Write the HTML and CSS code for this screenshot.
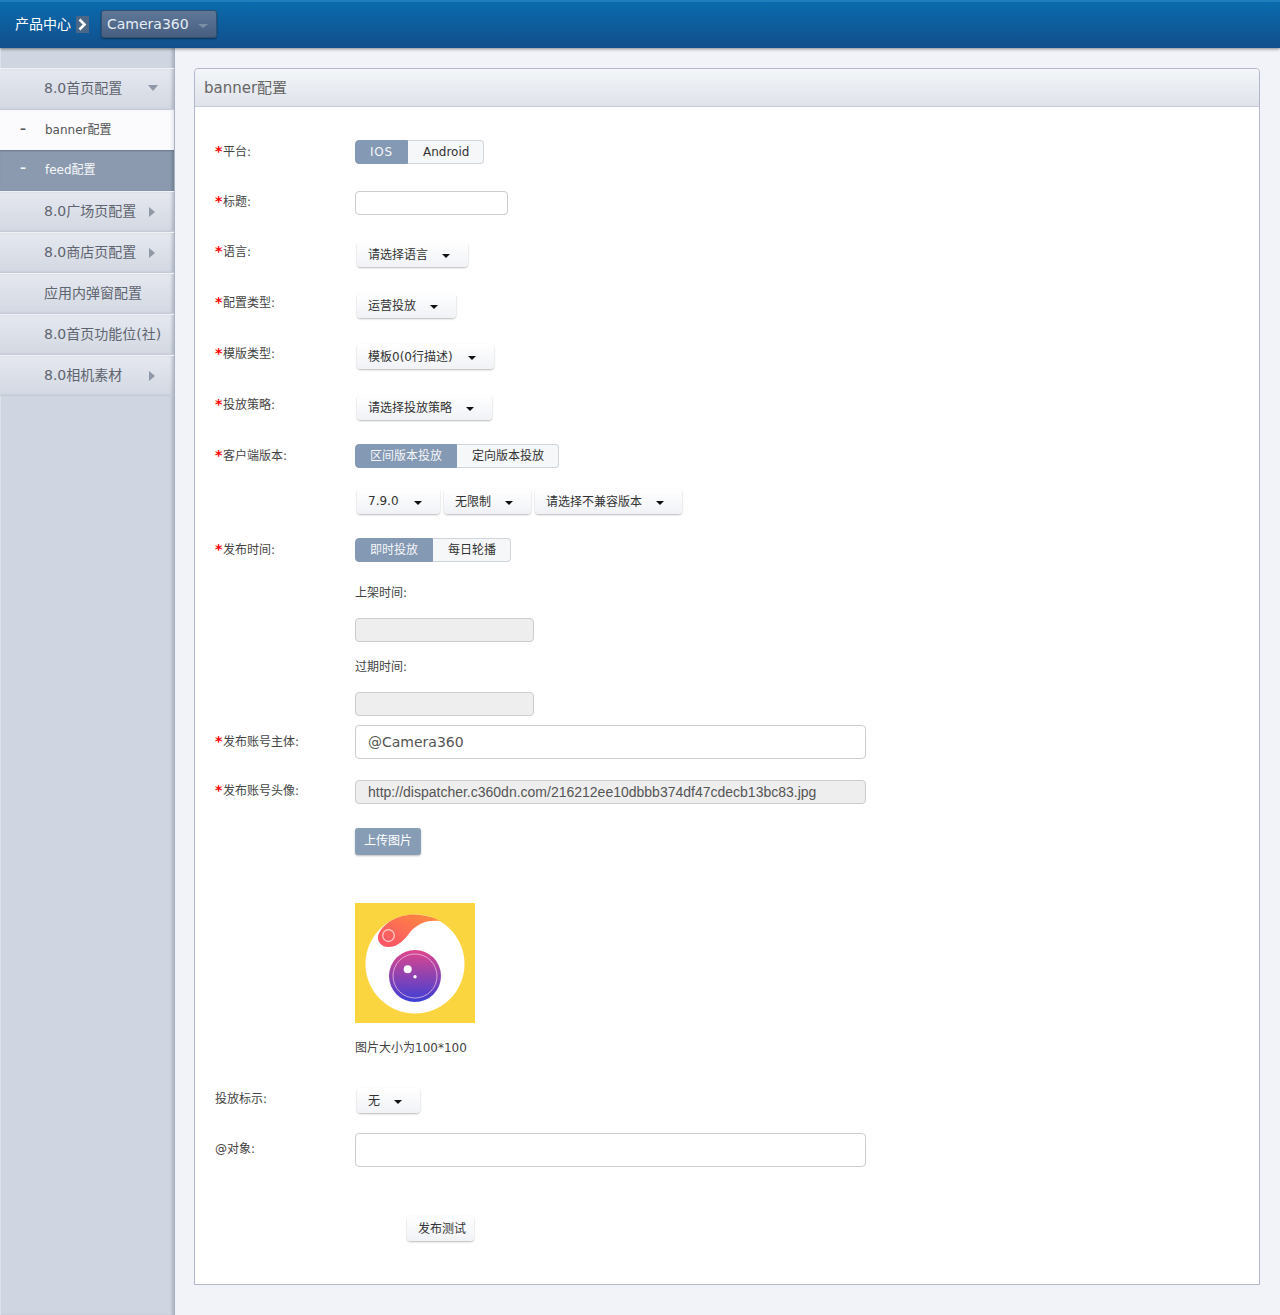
FILE: index.html
```html
<!DOCTYPE html>
<html lang="zh-CN">
<head>
<meta charset="utf-8">
<title>banner配置</title>
<link rel="stylesheet" href="styles.css">
</head>
<body>
<header class="topbar">
  <span class="crumb">产品中心</span>
  <span class="crumb-sep"><svg width="13" height="17" viewBox="0 0 13 17"><path d="M3.5 3.5 L8.5 8.5 L3.5 13.5" fill="none" stroke="#fff" stroke-width="2.6"/></svg></span>
  <button class="app-select"><span>Camera360</span><i class="app-caret"></i></button>
</header>
<div class="layout">
  <nav class="sidebar">
    <div class="nav-item open"><span>8.0首页配置</span><i class="tri-down"></i></div>
    <div class="nav-sub"><b>–</b><span>banner配置</span></div>
    <div class="nav-sub active"><b>–</b><span>feed配置</span></div>
    <div class="nav-item"><span>8.0广场页配置</span><i class="tri-right"></i></div>
    <div class="nav-item"><span>8.0商店页配置</span><i class="tri-right"></i></div>
    <div class="nav-item"><span>应用内弹窗配置</span></div>
    <div class="nav-item"><span>8.0首页功能位(社)</span></div>
    <div class="nav-item"><span>8.0相机素材</span><i class="tri-right"></i></div>
  </nav>
  <main class="main">
    <section class="panel">
      <h1 class="panel-title">banner配置</h1>
      <form class="panel-body">
        <div class="row h51"><label class="lbl low"><em>*</em>平台:</label>
          <div class="seg"><span class="seg-btn on latin">IOS</span><span class="seg-btn">Android</span></div></div>
        <div class="row h50"><label class="lbl"><em>*</em>标题:</label>
          <input class="input w153" type="text"></div>
        <div class="row h51"><label class="lbl"><em>*</em>语言:</label>
          <div class="drops nudge"><span class="drop">请选择语言<i></i></span></div></div>
        <div class="row h51"><label class="lbl"><em>*</em>配置类型:</label>
          <div class="drops nudge"><span class="drop">运营投放<i></i></span></div></div>
        <div class="row h51"><label class="lbl"><em>*</em>模版类型:</label>
          <div class="drops nudge"><span class="drop num">模板0(0行描述)<i></i></span></div></div>
        <div class="row h50"><label class="lbl"><em>*</em>投放策略:</label>
          <div class="drops nudge"><span class="drop">请选择投放策略<i></i></span></div></div>
        <div class="row h45"><label class="lbl low"><em>*</em>客户端版本:</label>
          <div class="seg"><span class="seg-btn on">区间版本投放</span><span class="seg-btn">定向版本投放</span></div></div>
        <div class="row h49"><div class="lbl"></div>
          <div class="drops"><span class="drop num">7.9.0<i></i></span><span class="drop">无限制<i></i></span><span class="drop">请选择不兼容版本<i></i></span></div></div>
        <div class="row h44"><label class="lbl low"><em>*</em>发布时间:</label>
          <div class="seg"><span class="seg-btn on">即时投放</span><span class="seg-btn">每日轮播</span></div></div>
        <div class="row h36"><div class="lbl"></div><span class="sub-lbl">上架时间:</span></div>
        <div class="row h38"><div class="lbl"></div><input class="input w179 off" type="text" disabled></div>
        <div class="row h36"><div class="lbl"></div><span class="sub-lbl">过期时间:</span></div>
        <div class="row h33"><div class="lbl"></div><input class="input w179 off" type="text" disabled></div>
        <div class="row h55"><label class="lbl tall"><em>*</em>发布账号主体:</label>
          <input class="input w511 big" type="text" value="@Camera360"></div>
        <div class="row h48"><label class="lbl"><em>*</em>发布账号头像:</label>
          <input class="input w511 off url" type="text" value="http://dispatcher.c360dn.com/216212ee10dbbb374df47cdecb13bc83.jpg" disabled></div>
        <div class="row h75"><div class="lbl"></div><span class="upload">上传图片</span></div>
        <div class="row h133"><div class="lbl"></div>
          <svg class="avatar" width="120" height="120" viewBox="0 0 120 120">
            <defs>
              <linearGradient id="lens" x1="0" y1="0" x2="0" y2="1"><stop offset="0" stop-color="#e0468c"/><stop offset="1" stop-color="#3c3fd6"/></linearGradient>
              <linearGradient id="tear" x1="0" y1="1" x2="1" y2="0"><stop offset="0" stop-color="#f94f6c"/><stop offset="1" stop-color="#ff8f3a"/></linearGradient>
            </defs>
            <rect width="120" height="120" fill="#fbd540"/>
            <circle cx="60" cy="61" r="49.5" fill="#fff"/>
            <path d="M23 33 C27 20 44 11 60 11.5 C70 12 78 14 85 18 C72 17 64 20 56 28 C50 36 44 44 33 44 C27 44 22 39 23 33 Z" fill="url(#tear)"/>
            <circle cx="33.5" cy="32.5" r="5.8" fill="none" stroke="#ffd0cf" stroke-width="1.2"/>
            <circle cx="60" cy="73" r="26" fill="url(#lens)"/>
            <circle cx="60" cy="73" r="22" fill="none" stroke="#f2c4e4" stroke-opacity=".75" stroke-width="1"/>
            <circle cx="52.7" cy="66.3" r="4" fill="#fff"/>
            <circle cx="60" cy="73.7" r="1.7" fill="#fff"/>
          </svg></div>
        <div class="row h52"><div class="lbl"></div><span class="sub-lbl note">图片大小为100*100</span></div>
        <div class="row h45"><label class="lbl"><span class="plain">投放标示:</span></label>
          <div class="drops"><span class="drop">无<i></i></span></div></div>
        <div class="row h83"><label class="lbl mid"><span class="plain">@对象:</span></label>
          <input class="input w511 big" type="text"></div>
        <div class="row submit"><span class="drop test">发布测试</span></div>
      </form>
    </section>
  </main>
</div>
</body>
</html>
```

FILE: styles.css
```css
* { box-sizing: border-box; }
html, body { margin: 0; padding: 0; }
body {
  font-family: "DejaVu Sans", "Noto Sans CJK SC", sans-serif;
  font-size: 12px;
  color: #444;
  background: #f1f3f9;
  height: 1315px;
  overflow: hidden;
}

/* top bar */
.topbar {
  height: 48px;
  display: flex;
  align-items: center;
  padding-left: 15px;
  border-top: 2px solid #1e7dbb;
  background: linear-gradient(#0a6bad, #124f8c);
  box-shadow: 0 1px 3px rgba(0, 0, 0, .45);
  position: relative;
  z-index: 2;
}
.crumb { color: #fff; font-size: 14px; width: 61px; margin-top: -5px; }
.crumb-sep {
  width: 13px; height: 17px; background: #4b6788; display: block; margin-top: -2px;
}
.crumb-sep svg { display: block; }
.app-select {
  margin: -2px 0 0 12px;
  width: 116px;
  height: 28px;
  padding: 0 0 0 5px;
  display: flex;
  align-items: center;
  font: inherit;
  font-size: 14px;
  color: #e6edf5;
  background: linear-gradient(#5f7898, #475e80);
  border: 1px solid #34506f;
  border-radius: 3px;
  box-shadow: 0 1px 2px rgba(0, 0, 0, .4);
}
.app-caret {
  margin: 3px 0 0 9px;
  width: 0; height: 0;
  border-left: 5px solid transparent;
  border-right: 5px solid transparent;
  border-top: 4px solid #7d90a8;
}

/* frame */
.layout { display: flex; height: 1267px; }
.sidebar {
  width: 175px;
  padding-top: 20px;
  background: #d0d6e1;
  border-right: 1px solid #a9b1c4;
  border-left: 1px solid #dde1e9;
  box-shadow: inset -3px 0 3px -1px rgba(90, 100, 120, .3);
  flex: none;
}
.nav-item {
  height: 41px;
  margin-left: -1px;
  padding: 0 0 4px 44px;
  display: flex;
  align-items: center;
  position: relative;
  font-size: 14px;
  color: #5f6570;
  background: linear-gradient(#e5e8ef, #d3d8e2);
  border-top: 1px solid #f0f2f6;
  border-bottom: 1px solid #c5cad5;
  box-shadow: inset -3px 0 3px -1px rgba(90, 100, 120, .3);
}
.nav-item.open { height: 42px; }
.nav-sub {
  height: 40px;
  margin-left: -1px;
  padding-bottom: 3px;
  display: flex;
  align-items: center;
  background: #fbfbfd;
  color: #555;
  box-shadow: inset -3px 0 3px -1px rgba(90, 100, 120, .12);
}
.nav-sub b { width: 45px; padding-left: 20px; font-weight: 700; }
.nav-sub.active {
  height: 41px;
  padding-bottom: 5px;
  background: #8b9aae;
  color: #f6f8fa;
  box-shadow: inset -3px 0 3px -1px rgba(60, 70, 90, .3), inset 0 2px 2px -1px rgba(60, 70, 90, .35);
}
.tri-down, .tri-right { position: absolute; width: 0; height: 0; }
.tri-down {
  left: 148px; top: 16px;
  border-left: 5px solid transparent;
  border-right: 5px solid transparent;
  border-top: 6px solid #8f98a6;
}
.tri-right {
  left: 149px; top: 15px;
  border-top: 5px solid transparent;
  border-bottom: 5px solid transparent;
  border-left: 6px solid #8f98a6;
}
.main { flex: 1; padding: 20px 20px 30px 19px; }

/* panel */
.panel {
  height: 1217px;
  background: #fff;
  border: 1px solid #b2b7cb;
  border-radius: 4px 4px 0 0;
  display: flex;
  flex-direction: column;
}
.panel-title {
  margin: 0;
  height: 38px;
  flex: none;
  padding-left: 9px;
  font-size: 15px;
  font-weight: 400;
  line-height: 39px;
  color: #666;
  background: linear-gradient(#f3f5f8, #dfe3ea);
  border-bottom: 1px solid #c6ccd6;
  border-radius: 4px 4px 0 0;
}
.panel-body { padding: 33px 0 0 20px; }

/* form rows */
.row { display: flex; align-items: flex-start; }
.h33 { height: 33px; } .h36 { height: 36px; } .h38 { height: 38px; }
.h44 { height: 44px; } .h45 { height: 45px; } .h48 { height: 48px; }
.h49 { height: 49px; } .h50 { height: 50px; } .h51 { height: 51px; }
.h52 { height: 52px; } .h55 { height: 55px; } .h75 { height: 75px; }
.h83 { height: 83px; } .h133 { height: 133px; }
.lbl { width: 140px; flex: none; line-height: 22px; color: #444; }
.lbl.low { line-height: 24px; }
.lbl.tall { line-height: 34px; }
.lbl.mid { line-height: 32px; }
.lbl em { display: inline-block; width: 8px; color: #f00; font-size: 14px; line-height: 1; font-style: normal; font-weight: 700; }
.plain { color: #444; }
.sub-lbl { line-height: 22px; color: #444; }
.sub-lbl.note { line-height: 24px; }

/* segmented buttons */
.seg { display: flex; }
.seg-btn {
  height: 24px;
  padding: 0 14px 0 15px;
  line-height: 22px;
  color: #333;
  background: #f5f7f8;
  border: 1px solid #cfd5dd;
  border-left: 0;
}
.seg-btn:first-child { border-left: 1px solid #cfd5dd; border-radius: 4px 0 0 4px; }
.seg-btn:last-child { border-radius: 0 4px 4px 0; }
.seg-btn.on {
  color: #f4f6f9;
  background: #8499b3;
  border-color: #8499b3;
  padding: 0 14px;
}
.seg-btn.latin { letter-spacing: .8px; }

/* dropdown buttons */
.drops { display: flex; gap: 4px; margin-left: 2px; }
.drops.nudge { margin-top: 1px; }
.drop {
  display: flex;
  align-items: center;
  height: 25px;
  padding: 0 18px 2px 11px;
  color: #333;
  white-space: nowrap;
  background: linear-gradient(#fff, #f0f2f6);
  border-radius: 4px;
  box-shadow: 0 1px 2px rgba(0, 0, 0, .28);
}
.drop i {
  margin: 4px 0 0 14px;
  width: 0; height: 0;
  border-left: 4px solid transparent;
  border-right: 4px solid transparent;
  border-top: 4px solid #111;
}
.drop.num i { margin-left: 15.5px; }

/* inputs */
.input {
  display: block;
  height: 24px;
  padding: 0 12px;
  background: #fff;
  border: 1px solid #cccccc;
  border-radius: 4px;
  font: inherit;
  color: #555;
}
.w153 { width: 153px; }
.w179 { width: 179px; }
.w511 { width: 511px; }
.input.big { height: 34px; font-size: 14px; }
.input.off { background: #eeeeee; }
.input.url { font-family: "Liberation Sans", Arial, sans-serif; font-size: 14px; color: #555; opacity: 1; -webkit-text-fill-color: #555; }

.upload {
  height: 27px;
  padding: 0 9px;
  line-height: 26px;
  color: #fff;
  background: #879db5;
  border-radius: 3px;
  box-shadow: 0 1px 2px rgba(0, 0, 0, .25);
}
.avatar { display: block; }
.submit { padding-left: 192px; }
.drop.test { padding: 0 8px 2px 11px; }
```
